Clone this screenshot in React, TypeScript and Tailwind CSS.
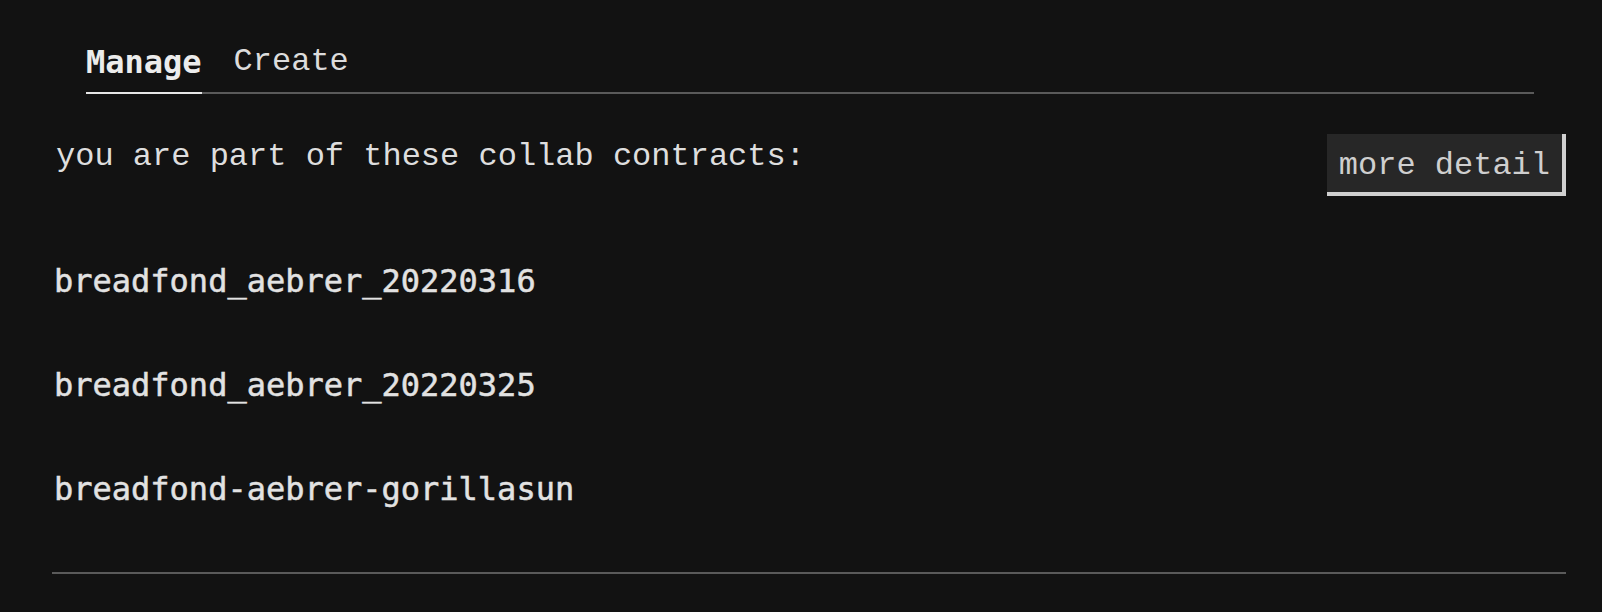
import React from "react";

const contracts = [
  "breadfond_aebrer_20220316",
  "breadfond_aebrer_20220325",
  "breadfond-aebrer-gorillasun",
];

export default function App() {
  return (
    <div className="min-h-[612px] w-full bg-[#121212] font-['DejaVu_Sans_Mono',monospace] text-[32px] leading-[40px]">
      <div className="ml-[52px] mr-[36px] pt-[42px]">
        <div className="ml-[34px] mr-[32px] flex gap-8 border-b-2 border-[#5a5a5a]">
          <button className="-mb-[2px] border-b-2 border-[#e6e6e6] pb-[10px] font-bold text-[#ececec]">
            Manage
          </button>
          <button className="-mb-[2px] border-b-2 border-transparent pb-[10px] font-['Liberation_Mono',monospace] text-[#dcdcdc]">
            Create
          </button>
        </div>
        <div className="mt-[40px] flex items-start justify-between">
          <p className="ml-[4px] mt-[3px] font-['Liberation_Mono',monospace] text-[#dedede]">
            you are part of these collab contracts:
          </p>
          <button className="border-b-4 border-r-4 border-[#d0d0d0] bg-[#272727] pl-3 pr-[12px] pt-[12px] pb-[6px] font-['Liberation_Mono',monospace] text-[#cfcfcf]">
            more detail
          </button>
        </div>
        <div className="mt-[65px] flex flex-col gap-[64px]">
          {contracts.map((c) => (
            <div key={c} className="pl-[2px] text-[#e2e2e2] [-webkit-text-stroke:0.5px_#e2e2e2]">
              {c}
            </div>
          ))}
        </div>
        <div className="mt-[63px] h-[2px] bg-[#5a5a5a]" />
      </div>
    </div>
  );
}
